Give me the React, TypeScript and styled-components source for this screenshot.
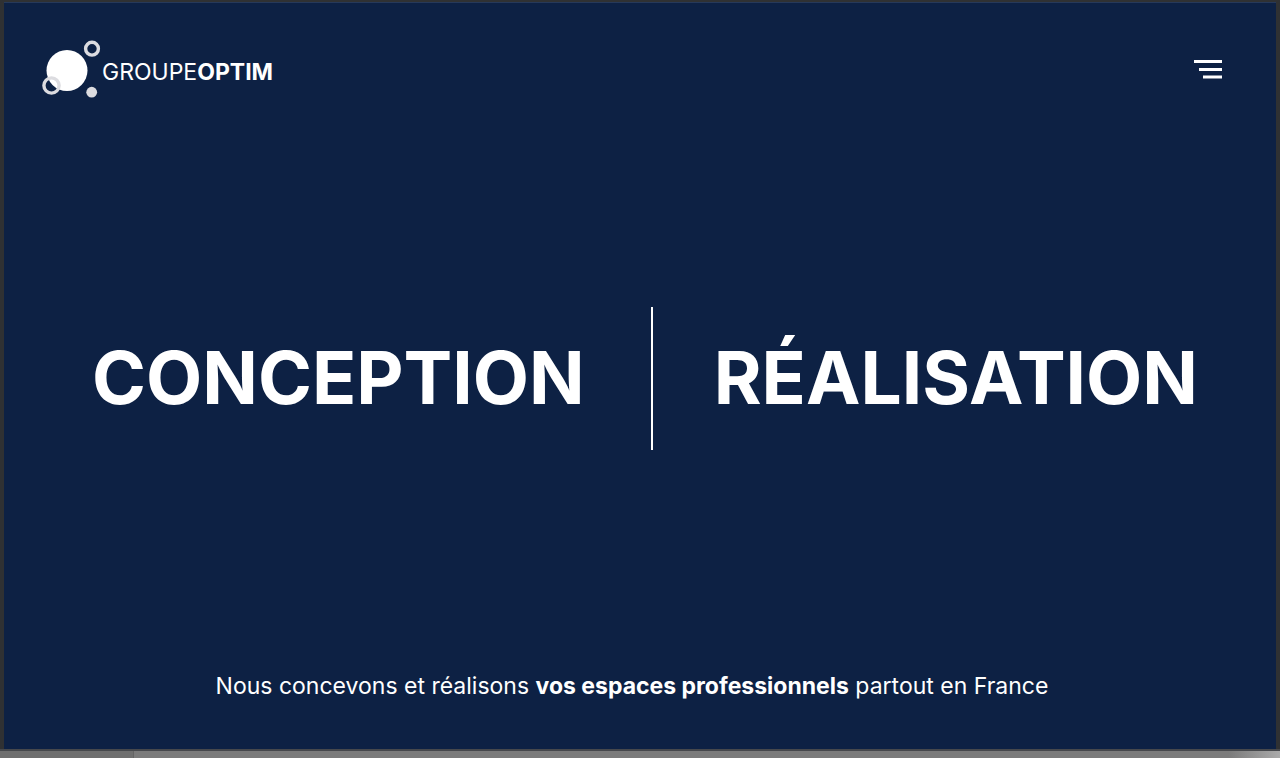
import React from 'react';
import styled, { createGlobalStyle } from 'styled-components';

const GlobalStyle = createGlobalStyle`
  *, *::before, *::after { box-sizing: border-box; }
  body {
    margin: 0;
    background: #2f3133;
    font-family: Inter, "Liberation Sans", sans-serif;
    color: #fff;
  }
`;

const Desktop = styled.div`
  display: flex;
  flex-direction: column;
  min-height: 100vh;
`;

const Screen = styled.div`
  flex: 1;
  display: flex;
  flex-direction: column;
  margin: 2px 4px 0;
  border-top: 1px solid #26395a;
  background: #0d2144;
`;

const Header = styled.header`
  display: flex;
  justify-content: space-between;
  align-items: center;
  height: 132px;
  padding: 0 48px 0 36px;
`;

const Brand = styled.a`
  display: flex;
  align-items: center;
  color: inherit;
  text-decoration: none;
`;

const BrandName = styled.span`
  padding-top: 6px;
  font-size: 23px;
  line-height: 26px;
`;

const MenuButton = styled.button`
  display: flex;
  padding: 6px;
  border: 0;
  background: none;
  color: inherit;
  cursor: pointer;
`;

const Hero = styled.main`
  flex: 1;
  display: grid;
  grid-template-columns: 36fr auto 35fr;
  align-items: center;
  column-gap: 48px;
  padding: 0 78px 0 88px;
`;

const Title = styled.h1<{ $align: 'left' | 'right' }>`
  margin: 0;
  font-size: 73px;
  line-height: 88px;
  font-weight: 700;
  text-align: ${({ $align }) => $align};
`;

const Divider = styled.div`
  width: 2px;
  height: 143px;
  background: #fff;
`;

const Tagline = styled.p`
  margin: 0;
  padding: 50px 20px 48px 4px;
  font-size: 23px;
  line-height: 30px;
  text-align: center;
`;

const Dock = styled.div`
  display: flex;
  height: 9px;
  border-top: 2px solid #46484c;
  background: linear-gradient(to right, #7b7b7b 96%, #aaa);
`;

const DockTab = styled.div`
  width: 134px;
  background: #6f6f6f;
  border-right: 1px solid #646464;
`;

const LogoMark = () => (
  <svg width="62" height="60" viewBox="0 0 62 60" aria-hidden="true">
    <circle cx="27" cy="31.5" r="20.5" fill="#fff" />
    <circle cx="11.5" cy="46.5" r="7.6" fill="none" stroke="#dcdce0" strokeWidth="3.4" />
    <circle cx="52" cy="9.7" r="6.4" fill="none" stroke="#dcdce0" strokeWidth="3.4" />
    <circle cx="51.7" cy="53.2" r="5.4" fill="#dcdce0" />
  </svg>
);

const MenuIcon = () => (
  <svg width="28" height="20" viewBox="0 0 28 20" aria-hidden="true" fill="#fff">
    <rect x="0" y="1" width="28" height="3" />
    <rect x="5" y="9" width="23" height="3" />
    <rect x="9" y="16.5" width="19" height="3" />
  </svg>
);

export default function App() {
  return (
    <>
      <GlobalStyle />
      <Desktop>
        <Screen>
          <Header>
            <Brand href="#">
              <LogoMark />
              <BrandName>GROUPE<b>OPTIM</b></BrandName>
            </Brand>
            <MenuButton type="button" aria-label="Menu">
              <MenuIcon />
            </MenuButton>
          </Header>
          <Hero>
            <Title $align="left">CONCEPTION</Title>
            <Divider />
            <Title $align="right">RÉALISATION</Title>
          </Hero>
          <Tagline>
            Nous concevons et réalisons <b>vos espaces professionnels</b> partout en France
          </Tagline>
        </Screen>
        <Dock>
          <DockTab />
        </Dock>
      </Desktop>
    </>
  );
}
